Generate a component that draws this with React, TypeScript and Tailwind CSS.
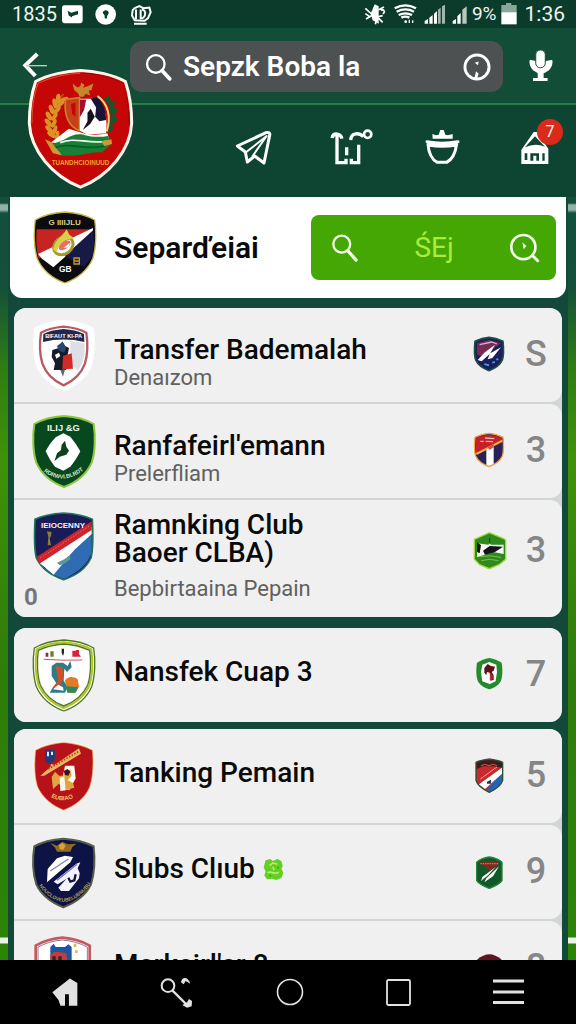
import type { ReactNode } from "react";

const SHIELD =
  "M93 0C62 2 28 10 4 24C-2 62 0 110 10 140C26 176 58 200 93 213C128 200 160 176 176 140C186 110 188 62 182 24C158 10 124 2 93 0Z";

function Crest({ children }: { children: ReactNode }) {
  return (
    <svg viewBox="0 0 186 213" className="h-[71px] w-[62px] shrink-0 overflow-visible" aria-hidden="true">
      {children}
    </svg>
  );
}

function SmallCrest({ children }: { children: ReactNode }) {
  return (
    <svg viewBox="0 0 96 108" className="h-9 w-8 shrink-0 overflow-visible" aria-hidden="true">
      {children}
    </svg>
  );
}

const wheat = [
  [182, 290, 10],
  [172, 304, -6],
  [162, 322, -14],
  [154, 342, -22],
  [152, 362, -30],
  [155, 382, -38],
  [162, 398, -46],
];

function MainCrest() {
  return (
    <svg viewBox="80 204 322 366" className="h-[122px] w-[107px]" aria-hidden="true">
      <path
        d="M241 211C200 212 142 224 106 244C92 285 87 330 87 370C91 450 155 528 241 562C327 528 391 450 395 370C395 330 390 285 376 244C340 224 285 212 241 211Z"
        fill="#c40606"
        stroke="#fff6ee"
        strokeWidth="9"
      />
      <path d="M241 219C205 220 150 231 113 250C99 290 95 330 95 370" fill="none" stroke="#e2512f" strokeWidth="3" />
      <path d="M241 219C285 220 332 231 369 250C383 290 387 330 387 370" fill="none" stroke="#a30404" strokeWidth="3" />
      <path
        d="M217 250L232 262L240 258L243 247L253 254L249 263L262 258L280 250L274 270L266 272L270 286L256 281L250 290L238 290L234 280L222 270Z"
        fill="#c8862a"
      />
      <path d="M190 282C160 310 150 350 172 408" fill="none" stroke="#b5560f" strokeWidth="5" />
      {wheat.map(([x, y, turn]) => (
        <g key={y} fill="#dd9226">
          <ellipse cx={x - 8} cy={y + 6} rx="7" ry="15" transform={`rotate(${turn - 8} ${x - 8} ${y + 6})`} />
          <ellipse cx={x + 9} cy={y + 8} rx="6" ry="14" transform={`rotate(${turn + 56} ${x + 9} ${y + 8})`} />
        </g>
      ))}
      <path d="M196 298L238 293V392C205 380 190 345 196 298Z" fill="#c8401b" stroke="#c9802b" strokeWidth="5" />
      <path d="M212 312L226 308V350L216 342Z" fill="#c40606" />
      <path d="M290 282C325 295 345 340 322 400L340 388L336 374L354 360L342 346L354 328L340 320L346 304L330 300L328 286L312 294Z" fill="#17552c" />
      <path d="M239 296L290 296C318 320 322 360 318 400L262 404L239 392Z" fill="#ffffff" />
      <path d="M239 298H258L252 330L239 352Z" fill="#a3122c" />
      <path d="M272 296L292 290C308 308 318 330 318 360L298 364L285 350L288 322Z" fill="#181438" />
      <path d="M262 338L272 326L284 350L270 372L248 390L262 364Z" fill="#16121c" />
      <path d="M292 288C324 310 334 350 320 394" fill="none" stroke="#e6db80" strokeWidth="6" />
      <path d="M152 428L206 386L244 398C270 406 294 406 322 400L330 430L250 440Z" fill="#fffdf5" />
      <path d="M150 432C196 426 212 396 250 404C276 412 300 412 324 408L332 434L306 458C272 452 240 474 178 466Z" fill="#178035" />
      <path d="M180 428C226 410 254 432 322 424" fill="none" stroke="#ffffff" strokeWidth="5" />
      <path d="M160 444C210 424 256 454 314 438" fill="none" stroke="#0b5a25" strokeWidth="5" />
      <path d="M134 418L156 428C164 446 180 454 184 466L158 460ZM304 424L334 418L336 432L312 438Z" fill="#d19533" />
      <text x="241" y="496" textAnchor="middle" className="font-['Liberation_Sans'] text-[19px] font-bold" fill="#f0a030">
        TUANDHCIOINUUD
      </text>
    </svg>
  );
}

const crests = {
  title: (
    <Crest>
      <path d={SHIELD} fill="#0b0b10" stroke="#c9b84a" strokeWidth="4" />
      <path d="M8 52H176L14 140C6 110 6 80 8 52Z" fill="#c62322" />
      <path d="M177 48V60L58 166L24 140L12 126Z" fill="#ffffff" />
      <path d="M178 54C182 90 180 120 172 138L150 166L92 132Z" fill="#171a45" />
      <text x="92" y="40" textAnchor="middle" className="font-['Liberation_Sans'] text-[24px] font-bold" fill="#d9cf8f">
        G IIIIJLU
      </text>
      <ellipse cx="88" cy="101" rx="31" ry="25" fill="none" stroke="#a99b27" strokeWidth="9" transform="rotate(-38 88 101)" />
      <path d="M58 112C60 88 84 74 98 52L106 68L120 78C100 80 72 94 68 122Z" fill="#d9cf4c" />
      <ellipse cx="92" cy="100" rx="20" ry="11" fill="#e8705f" transform="rotate(-35 92 100)" />
      <path d="M88 108L108 92L104 106Z" fill="#ffffff" />
      <path d="M120 138H136V156H120ZM120 147H136" fill="none" stroke="#c69b22" strokeWidth="4" />
      <text x="94" y="180" textAnchor="middle" className="font-['Liberation_Sans'] text-[25px] font-bold" fill="#ffffff">
        GB
      </text>
    </Crest>
  ),
  transfer: (
    <Crest>
      <path d={SHIELD} fill="#ffffff" />
      <path d="M92 20C70 22 42 28 24 38C20 66 20 104 28 130C40 164 66 184 92 196C118 184 144 164 156 130C164 104 164 66 160 38C142 28 114 22 92 20Z" fill="#ffffff" stroke="#b85a62" strokeWidth="7" />
      <path d="M92 27C70 29 48 33 31 42L30 66C70 56 114 56 154 66L153 42C136 33 114 29 92 27Z" fill="#20284e" />
      <text x="92" y="55" textAnchor="middle" className="font-['Liberation_Sans'] text-[17px] font-bold" fill="#ffffff">
        BIFAUT KI-PA
      </text>
      <path d="M112 62L154 70C158 100 152 130 134 152L112 130Z" fill="#dedfe4" />
      <path d="M58 90L78 84L88 64L96 78L108 84L104 104L114 130L98 150H62L66 130L56 110Z" fill="#181a29" />
      <path d="M72 78L88 66L100 82L94 98L78 92Z" fill="#27486f" />
      <path d="M90 108L116 100L120 146L88 148Z" fill="#d02c25" />
      <path d="M66 104L78 98L82 108L70 116Z" fill="#ffffff" />
      <path d="M82 150L96 148L90 170Z" fill="#5b6475" />
    </Crest>
  ),
  ranfa: (
    <Crest>
      <path d={SHIELD} fill="#08481f" stroke="#8cc63f" strokeWidth="6" />
      <text x="91" y="46" textAnchor="middle" className="font-['Liberation_Sans'] text-[28px] font-bold" fill="#eef7e6">
        ILIJ &amp;G
      </text>
      <path d="M91 52L112 62C124 78 134 90 142 106C134 122 124 138 112 152L91 164L66 152C54 138 46 122 38 106C46 90 56 76 68 64Z" fill="#ffffff" />
      <path d="M96 74L100 92L108 104L100 116L80 122L64 136L72 112L84 102L86 86Z" fill="#10411f" />
      <path id="ranfa-arc" d="M32 166Q92 212 154 160" fill="none" />
      <text className="font-['Liberation_Sans'] text-[17px] font-bold" fill="#d5e6c8">
        <textPath href="#ranfa-arc">RDRWVI.BLRDT</textPath>
      </text>
    </Crest>
  ),
  ranking: (
    <Crest>
      <path d="M92 3C62 5 30 10 6 22C4 62 2 108 10 138C26 172 58 192 92 203C126 192 158 172 174 138C182 108 180 62 178 22C154 10 122 5 92 3Z" fill="#191c56" stroke="#23745c" strokeWidth="5" />
      <path d="M176 60V110C176 150 132 184 92 200C70 194 52 184 38 172Z" fill="#2f6cb4" />
      <path d="M176 44V66L126 112L110 130L62 188L16 150Z" fill="#ffffff" />
      <path d="M176 28V54L18 156L12 134Z" fill="#cf232c" />
      <path d="M22 138L172 40" stroke="#e4757a" strokeWidth="3" strokeDasharray="4 5" />
      <path d="M42 58L56 60L54 72L50 78L54 100H44L46 74Z" fill="#8c7a3c" />
      <path d="M72 152L94 142L110 130L112 142L96 154L80 160Z" fill="#5c9a92" />
      <text x="90" y="47" textAnchor="middle" className="font-['Liberation_Sans'] text-[24px] font-bold" fill="#f1f3f8">
        IEIOCENNY
      </text>
    </Crest>
  ),
  nansfek: (
    <Crest>
      <path d={SHIELD} fill="#ffffff" stroke="#4b7a1d" strokeWidth="4" />
      <path d="M92 7C64 9 34 16 11 28C6 64 8 108 17 137C32 170 60 192 92 204C124 192 154 170 169 137C178 108 180 64 175 28C152 16 120 9 92 7Z" fill="none" stroke="#b5c22a" strokeWidth="6" />
      <path d="M92 12C64 14 38 20 16 31C11 64 13 108 22 135C36 166 62 187 92 198C122 187 150 166 164 135C173 108 175 64 170 31C146 20 120 14 92 12Z" fill="none" stroke="#4b7a1d" strokeWidth="4" />
      <path d="M32 58Q90 62 148 60" stroke="#c95b5b" strokeWidth="3" fill="none" />
      <path d="M38 38H46V50H38Z" fill="#93302e" />
      <path d="M52 34H62V50H52Z" fill="#6f7c2c" />
      <path d="M86 26H93V38L90 48L86 38Z" fill="#26202e" />
      <path d="M118 32H128L130 30H138V42L144 50H118Z" fill="#d8233b" />
      <path d="M56 78L70 68H90L104 78L112 62L116 82L102 96L94 86L92 122L104 140L96 158H50L60 142L70 130L56 108Z" fill="#2e7d86" />
      <path d="M68 78L88 82L92 110L84 132L66 150L62 140L76 120Z" fill="#cf512a" />
      <path d="M60 148L76 134L90 142L92 152Z" fill="#ffffff" />
      <path d="M96 122C102 108 124 108 134 118L138 140L126 158H104Z" fill="#e07b28" />
      <path d="M96 138L136 142L128 158H104Z" fill="#2c8a62" />
    </Crest>
  ),
  tanking: (
    <Crest>
      <path d={SHIELD} fill="#fdf2e0" />
      <path d="M92 5C64 7 34 14 8 28C4 64 4 108 14 138C30 172 58 194 92 207C126 194 156 172 170 138C180 108 182 64 178 28C152 14 120 7 92 5Z" fill="#b71219" stroke="#e4a063" strokeWidth="2" />
      <path d="M36 26H66V54L54 70L36 62Z" fill="#243a78" />
      <path d="M42 32H48V46H42ZM54 32H60V42H54Z" fill="#dfe5f2" />
      <path d="M22 104L52 78L54 68L64 72L138 22L144 38L34 104Z" fill="#e7b65b" />
      <path d="M46 84L136 32" stroke="#b43d20" strokeWidth="5" strokeDasharray="4 5" />
      <path d="M96 74L124 74L128 112L110 146H84V132Z" fill="#fff7e8" />
      <path d="M56 108L66 92L78 104H92L98 90L112 86L116 104L104 118L120 126L124 140L94 148L78 128L60 144Z" fill="#dfa640" />
      <path d="M92 90L104 84L112 92L106 104L96 102Z" fill="#391718" />
      <path d="M80 110L94 106L98 148L82 150Z" fill="#fff7e8" />
      <path id="tanking-arc" d="M54 168Q92 190 134 164" fill="none" />
      <text className="font-['Liberation_Sans'] text-[18px] font-bold" fill="#efc36a">
        <textPath href="#tanking-arc">EUBIAO</textPath>
      </text>
    </Crest>
  ),
  slube: (
    <Crest>
      <path d="M91 5C62 7 28 14 4 28C-2 64 0 110 10 142C26 176 58 198 91 211C124 198 158 176 174 142C184 110 186 64 182 28C156 14 120 7 91 5Z" fill="#0d1345" stroke="#575f45" strokeWidth="6" />
      <path d="M52 18L72 26L88 14L104 22L130 20L118 30L112 44H72L66 32Z" fill="#8f6c22" />
      <path d="M78 24L88 18L98 26L90 40L80 36Z" fill="#d6a439" />
      <path d="M44 96L72 64L96 56L120 60L112 76L42 136Z" fill="#ffffff" />
      <path d="M52 102L106 66" stroke="#8189b5" strokeWidth="4" />
      <path d="M62 134L130 80L142 76L134 94L140 108L138 124L108 162H84L76 152L100 126L74 142Z" fill="#f4f3fd" />
      <path d="M72 130L132 82" stroke="#7570cf" strokeWidth="4" />
      <path d="M106 122L112 134L124 130L128 112" fill="none" stroke="#0d1345" strokeWidth="7" />
      <path id="slube-arc" d="M18 146Q92 244 172 142" fill="none" />
      <text className="font-['Liberation_Sans'] text-[15px] font-bold" fill="#a99d55">
        <textPath href="#slube-arc">NOUCLOVEUBELUBNUBU</textPath>
      </text>
    </Crest>
  ),
  last: (
    <Crest>
      <path d="M88 14C62 16 32 24 8 38V120H170V38C146 24 114 16 88 14Z" fill="#ffffff" stroke="#c6595e" strokeWidth="8" />
      <path d="M88 21C62 23 38 30 15 42V120H163V42C140 30 114 23 88 21Z" fill="none" stroke="#4c3561" strokeWidth="2" />
      <path d="M52 42L62 32L68 42H96L106 34L116 42V100H52Z" fill="#1d55a0" />
      <path d="M52 64L66 56L100 60L104 100H52Z" fill="#c83b33" />
      <path d="M58 70H68V84H58ZM76 70H86V84H76Z" fill="#282540" />
      <path d="M122 32H130V42H122ZM126 52H134V60H126Z" fill="#e8b75c" />
    </Crest>
  ),
};

const SMALL = "M48 4C34 5 18 10 6 16C4 36 4 60 8 72C16 90 32 98 48 104C64 98 80 90 88 72C92 60 92 36 90 16C78 10 62 5 48 4Z";

const smallCrests = {
  transfer: (
    <SmallCrest>
      <path d={SMALL} fill="#1b1f5c" stroke="#1e4f42" strokeWidth="5" />
      <path d="M12 22L48 12L84 22L28 60L12 56Z" fill="#7a2a52" />
      <path d="M20 26L56 18L72 24" stroke="#c7b7cc" strokeWidth="4" fill="none" />
      <path d="M14 72L34 50L66 26L52 52L84 34L58 66L44 70L50 54L26 76Z" fill="#ffffff" />
      <path d="M34 84L48 88M58 80L66 78M70 70H76" stroke="#5a9ee0" strokeWidth="5" />
    </SmallCrest>
  ),
  ranfa: (
    <SmallCrest>
      <path d={SMALL} fill="#29225a" stroke="#f0a443" strokeWidth="4" />
      <path d="M9 19C30 6 66 6 87 19V32L9 66Z" fill="#c51f2b" />
      <path d="M10 66L88 26" stroke="#f6b33f" strokeWidth="6" />
      <path d="M40 52L62 42V96L48 102L40 98Z" fill="#ffffff" />
      <path d="M36 18L64 20M22 28H32M38 28L60 29" stroke="#f6b8a4" strokeWidth="4" />
      <path d="M44 46L62 36V46L50 54Z" fill="#d9542c" />
    </SmallCrest>
  ),
  ranking: (
    <SmallCrest>
      <path d="M49 2L92 20L98 24V82L78 98L49 110L20 98L4 82V22Z" fill="#2f8a1e" stroke="#a6da3c" strokeWidth="4" />
      <path d="M12 34L46 38L50 34L54 38H92V66L60 60L12 76Z" fill="#f4f7ef" />
      <path d="M12 30L24 40L20 64L12 60Z" fill="#12160f" />
      <path d="M30 56L50 42L90 44L66 60L36 68Z" fill="#14131c" />
      <path d="M50 18V34" stroke="#12401a" strokeWidth="3" />
      <path d="M18 74Q50 68 84 76M24 86Q50 78 76 86" stroke="#7bc043" strokeWidth="3" fill="none" />
    </SmallCrest>
  ),
  nansfek: (
    <SmallCrest>
      <path d="M49 6C36 8 22 14 12 20C8 44 10 66 16 78C24 90 36 96 49 100C62 96 74 90 82 78C88 66 90 44 86 20C76 14 62 8 49 6Z" fill="#248a2c" />
      <path d="M49 18L70 26L72 48L68 76L50 84L28 76L24 48L28 26Z" fill="#ffffff" />
      <path d="M34 36L44 24L54 30L66 32L62 44L56 48L62 58V72L52 74L50 50L42 48L40 58L34 50Z" fill="#5d1219" />
      <path d="M52 50L60 60L58 72L50 70Z" fill="#b8262a" />
    </SmallCrest>
  ),
  tanking: (
    <SmallCrest>
      <path d="M49 6C36 8 20 10 9 16V70C14 88 32 98 49 106C66 98 84 88 89 70V16C78 10 62 8 49 6Z" fill="#c9282d" stroke="#24553c" strokeWidth="4" />
      <path d="M11 18C30 6 68 6 87 18V32L62 28H30L11 36Z" fill="#3a1d1f" />
      <path d="M24 26L36 22L48 26L60 22L72 26" stroke="#c35a4f" strokeWidth="3" fill="none" />
      <path d="M87 42V70C82 86 66 96 49 103L40 98Z" fill="#2463ad" />
      <path d="M87 32V50L36 96L18 82Z" fill="#ffffff" />
      <path d="M22 66L72 30" stroke="#efa09a" strokeWidth="3" />
      <path d="M42 74L54 68V80H42Z" fill="#213b4b" />
    </SmallCrest>
  ),
  slube: (
    <SmallCrest>
      <path d="M49 12C36 14 20 20 11 28V82C16 92 34 100 49 106C64 100 82 92 87 82V28C78 20 62 14 49 12Z" fill="#12592a" stroke="#25803b" strokeWidth="4" />
      <path d="M18 30C34 22 64 22 80 30L72 38L50 54L34 40Z" fill="#7e2c20" />
      <path d="M22 32H76" stroke="#c58b45" strokeWidth="4" strokeDasharray="4 3" />
      <path d="M24 84L28 72L68 42L46 66ZM34 88L40 76L78 40L60 70Z" fill="#ffffff" />
    </SmallCrest>
  ),
  last: (
    <SmallCrest>
      <path d="M49 16C38 16 24 22 12 32V90H86V32C74 22 60 16 49 16Z" fill="#5f1420" />
    </SmallCrest>
  ),
};

type Id = keyof typeof smallCrests;
type RowData = { id: Id; title: string[]; sub?: string; count: string; mark?: string; sprout?: boolean };

const groups: RowData[][] = [
  [
    { id: "transfer", title: ["Transfer Bademalah"], sub: "Denaızom", count: "S" },
    { id: "ranfa", title: ["Ranfafeirl'emann"], sub: "Prelerfliam", count: "3" },
    { id: "ranking", title: ["Ramnking Club", "Baoer CLBA)"], sub: "Bepbirtaaina Pepain", count: "3", mark: "0" },
  ],
  [{ id: "nansfek", title: ["Nansfek Cuap 3"], count: "7" }],
  [
    { id: "tanking", title: ["Tanking Pemain"], count: "5" },
    { id: "slube", title: ["Slubs Clıub"], count: "9", sprout: true },
    { id: "last", title: ["Markeirl'er 8"], count: "8" },
  ],
];

function Sprout() {
  return (
    <svg viewBox="0 0 64 68" className="h-[23px] w-[21px]" aria-hidden="true">
      <path d="M8 6L22 2L30 8L44 2L56 8L60 24L56 32L62 44L56 60L40 66L28 62L12 64L4 52L8 40L2 28Z" fill="#62cf22" />
      <path d="M20 22L30 14L44 18M14 44C24 36 36 52 48 42M30 26L34 36" stroke="#b4ec6c" strokeWidth="5" fill="none" />
      <circle cx="22" cy="52" r="3" fill="#3fa81c" />
      <circle cx="46" cy="28" r="3" fill="#3fa81c" />
    </svg>
  );
}

function Row({ row }: { row: RowData }) {
  const tall = row.title.length > 1;
  return (
    <li className={`relative rounded-r-xl bg-[#f0f0f0] ${tall ? "pb-[14px]" : ""}`}>
      <a href={`#${row.id}`} className="flex items-start pr-[11px] pl-[19px]">
        <span className="pt-3 pb-[11px]">{crests[row.id]}</span>
        <span className={`ml-[19px] min-w-0 flex-1 ${tall ? "pt-[11px]" : row.sub ? "pt-7" : "pt-[30px]"}`}>
          {row.title.map((line) => (
            <span key={line} className="flex items-center gap-2 text-[28px] leading-7 font-medium whitespace-nowrap text-[#0a0a0a]">
              {line}
              {row.sprout && <Sprout />}
            </span>
          ))}
          {row.sub && (
            <span className={`block text-[22px] leading-7 whitespace-nowrap text-[#606060] ${tall ? "mt-2" : ""}`}>{row.sub}</span>
          )}
        </span>
        <span className={`flex items-center gap-4 ${tall ? "h-25" : "h-23"}`}>
          {smallCrests[row.id]}
          <span className="w-[30px] text-center text-[36px] leading-10 font-medium text-[#868686]">{row.count}</span>
        </span>
      </a>
      {row.mark && <span className="absolute bottom-2 left-[10px] text-[24px] leading-6 font-bold text-[#777]">{row.mark}</span>}
    </li>
  );
}

function StatusBar() {
  return (
    <div className="flex h-7 items-center justify-between bg-[#0a3b2b] pr-[11px] pl-3 text-[20px] leading-6 text-[#f0f5f2]">
      <div className="flex items-center gap-2">
        <span className="w-[42px]">1835</span>
        <svg viewBox="0 0 270 62" className="h-[21px] w-[90px]" aria-hidden="true">
          <rect x="0" y="3" width="62" height="54" rx="7" fill="#fff" />
          <path d="M17 20L28 26L48 20V30L30 36V40L20 34Z" fill="#0a3b2b" />
          <circle cx="131" cy="31" r="31" fill="#fff" />
          <path d="M122 26C124 14 142 16 140 28L136 34L134 44L128 42V34Z" fill="#0a3b2b" />
          <path d="M218 12L232 6L244 12L262 10L266 24L258 42L248 50L218 48L210 34L212 18Z" fill="none" stroke="#fff" strokeWidth="6" />
          <path d="M222 16V46M236 16V42C250 44 256 18 240 16M216 59H254" fill="none" stroke="#fff" strokeWidth="6" />
        </svg>
      </div>
      <div className="flex items-center gap-1">
        <svg viewBox="206 2 312 66" className="h-[22px] w-[104px]" aria-hidden="true">
          <path d="M250 22L266 14M210 18L232 38L212 50M232 30L262 60M240 66L246 44L262 40M210 34L222 42M256 24C266 20 272 30 262 34" fill="none" stroke="#fff" strokeWidth="5" />
          <path d="M238 6L250 12V64L232 54L226 34Z" fill="#fff" />
          <path d="M298 18Q330 0 362 18M304 28Q330 14 356 28M310 38Q330 28 350 38M318 46Q330 40 342 46" fill="none" stroke="#fff" strokeWidth="7" />
          <circle cx="331" cy="58" r="4" fill="#fff" />
          <path d="M342 52V62M352 54V62" stroke="#fff" strokeWidth="4" />
          <path d="M388 56L398 50V64H388ZM402 46L412 38V64H402ZM416 34L425 26V64H416Z" fill="#fff" />
          <path d="M428 22L436 16V64H428ZM440 12L449 7V64H440Z" fill="#9fb5ac" />
          <path d="M472 56L482 50V64H472ZM486 42L496 32V64H486Z" fill="#fff" />
          <path d="M501 22L514 12V64H501Z" fill="#b7c8c0" />
        </svg>
        <span className="text-[19px]">9%</span>
        <svg viewBox="0 0 48 66" className="h-[22px] w-4" aria-hidden="true">
          <path d="M15 0H31V6H47V30H1V6H15Z" fill="#8aa79b" />
          <path d="M1 28H47V64H1Z" fill="#fff" />
        </svg>
        <span className="ml-1 text-[21px]">1:36</span>
      </div>
    </div>
  );
}

function Toolbar() {
  const icon = "h-10 w-10 overflow-visible";
  return (
    <nav className="flex items-start justify-between pt-[23px] pr-[21px] pb-[29px] pl-[235px]">
      <button aria-label="Send" className="h-10">
        <svg viewBox="705 384 120 120" className={icon}>
          <g fill="none" stroke="#fff" strokeWidth="9" strokeLinejoin="round" strokeLinecap="round">
            <path d="M712 438L798 398C806 396 811 398 809 406L792 489L764 468L742 486L736 456Z" />
            <path d="M738 457L800 408L758 468" strokeWidth="6" />
          </g>
        </svg>
      </button>
      <button aria-label="Line-ups" className="h-10">
        <svg viewBox="122 384 120 120" className={icon}>
          <g fill="none" stroke="#fff" strokeWidth="10">
            <path d="M134 414C138 396 160 400 164 416M149 402V488H176V476M190 420C192 396 216 398 228 410M214 434V488H192V476M178 442V466" />
            <circle cx="241" cy="403" r="11" strokeWidth="8" />
          </g>
        </svg>
      </button>
      <button aria-label="Cup" className="h-10">
        <svg viewBox="402 384 120 120" className={icon}>
          <g fill="none" stroke="#fff" strokeWidth="9" strokeLinejoin="round" strokeLinecap="round">
            <path d="M417 425Q462 434 510 425M420 432C422 462 434 480 448 487H476C490 480 502 462 506 432M424 436Q462 442 502 436" />
          </g>
          <path d="M433 402L444 406L452 404L457 390H467L472 404L480 406L494 402V416H434Z" fill="#fff" />
        </svg>
      </button>
      <button aria-label="Home, 1 new" className="relative h-10">
        <svg viewBox="680 384 120 120" className={icon}>
          <path d="M699 492V450L736 396H745L780 446V492Z" fill="#fff" />
          <path d="M710 442L740 409L770 440Q740 428 710 442Z" fill="#0e4532" />
          <path d="M709 460H717V480H709ZM726 460H752V482H744V467H735V482H726ZM762 460H769V482H762Z" fill="#0e4532" />
        </svg>
        <span className="absolute -top-[9px] left-[22px] flex h-[26px] w-[26px] items-center justify-center rounded-full bg-[#dc2a1a] text-[16px] leading-none text-white">
          7
        </span>
      </button>
    </nav>
  );
}

function Header() {
  return (
    <header className="relative bg-[#0e4532]">
      <StatusBar />
      <div className="flex items-start border-b-2 border-[#23803f] bg-[#124d38] pt-[13px] pr-[22px] pb-[11px] pl-[22px]">
        <button aria-label="Back" className="mt-2.5 w-[26px]">
          <svg viewBox="66 152 78 84" className="h-7 w-[26px]">
            <path d="M112 161L76 195L106 227" fill="none" stroke="#fff" strokeWidth="12" />
            <path d="M78 196H141" stroke="#b9cfc5" strokeWidth="4" />
          </svg>
        </button>
        <label className="ml-[82px] flex h-[51px] min-w-0 flex-1 items-center rounded-xl bg-[#4d5152] pr-3 pl-[15px]">
          <svg viewBox="434 156 80 82" className="h-7 w-[27px] shrink-0" aria-hidden="true">
            <circle cx="466" cy="188" r="26" fill="none" stroke="#fff" strokeWidth="7" />
            <path d="M485 208L507 232" stroke="#fff" strokeWidth="11" strokeLinecap="round" />
          </svg>
          <input
            type="text"
            aria-label="Search"
            defaultValue="Sepzk Boba la"
            className="ml-[11px] min-w-0 flex-1 bg-transparent text-[28px] leading-9 font-semibold text-white outline-none"
          />
          <svg viewBox="526 152 86 86" className="h-7 w-7 shrink-0" aria-hidden="true">
            <circle cx="569" cy="195" r="37" fill="none" stroke="#fff" strokeWidth="9" />
            <path d="M562 182L574 178L572 190ZM566 208L574 216L568 234H560Z" fill="#fff" />
          </svg>
        </label>
        <button aria-label="Voice search" className="mt-2 ml-[25px]">
          <svg viewBox="721 146 78 100" className="h-[33px] w-[26px]">
            <path d="M729 183C729 226 791 226 791 183L776 186C774 204 746 204 744 186Z" fill="#fff" stroke="#fff" strokeWidth="8" strokeLinejoin="round" />
            <rect x="744" y="149" width="29" height="54" rx="14" fill="#fff" stroke="#124d38" strokeWidth="3" />
            <path d="M750 208H768V234H780V243H736V234H750Z" fill="#fff" />
          </svg>
        </button>
      </div>
      <Toolbar />
      <div className="absolute top-[68px] left-[27px]">
        <MainCrest />
      </div>
    </header>
  );
}

function TitleCard() {
  return (
    <section className="mx-0.5 flex items-center rounded-b-xl bg-white py-[15px] pr-2.5 pl-6">
      {crests.title}
      <h1 className="ml-[18px] flex-1 text-[30px] leading-9 font-semibold text-[#0a0a0a]">Separďeiai</h1>
      <div className="flex h-[65px] w-[245px] items-center justify-between rounded-lg bg-[#45a704] pr-[15px] pl-5">
        <button aria-label="Find">
          <svg viewBox="128 128 86 92" className="h-[30px] w-7">
            <circle cx="161" cy="162" r="26" fill="none" stroke="#f4ffe9" strokeWidth="7" />
            <path d="M181 184L205 211" stroke="#f4ffe9" strokeWidth="10" strokeLinecap="round" />
          </svg>
        </button>
        <span className="text-[28px] leading-9 text-[#a9ee35]">ŚEj</span>
        <button aria-label="Find recent">
          <svg viewBox="666 128 96 92" className="h-[30px] w-8">
            <circle cx="709" cy="171" r="37" fill="none" stroke="#f4ffe9" strokeWidth="8" />
            <path d="M737 197L753 213" stroke="#f4ffe9" strokeWidth="9" strokeLinecap="round" />
            <path d="M706 156L718 168L710 178Z" fill="#f4ffe9" />
          </svg>
        </button>
      </div>
    </section>
  );
}

function SystemBar() {
  return (
    <nav className="flex h-16 shrink-0 items-center justify-between bg-black px-[52px]">
      <button aria-label="Home screen">
        <svg viewBox="156 477 80 88" className="h-[29px] w-[26px]">
          <path d="M211 478L234 492V562H208V526H196V562H182L176 544L157 520Z" fill="#e2e2e2" />
        </svg>
      </button>
      <button aria-label="Tools">
        <svg viewBox="475 474 99 93" className="h-[31px] w-[33px]">
          <circle cx="499" cy="500" r="19" fill="none" stroke="#e2e2e2" strokeWidth="6" />
          <path d="M512 514L556 558" stroke="#e2e2e2" strokeWidth="7" />
          <path d="M542 558L556 550L562 540L571 546L570 562L556 566Z" fill="#e2e2e2" />
          <path d="M538 490C540 472 560 472 566 494L552 486L546 496Z" fill="#e2e2e2" />
        </svg>
      </button>
      <button aria-label="Overview">
        <svg viewBox="0 0 28 28" className="h-7 w-7">
          <circle cx="14" cy="14" r="12.5" fill="none" stroke="#e2e2e2" strokeWidth="1.6" />
        </svg>
      </button>
      <button aria-label="Recent apps">
        <svg viewBox="0 0 25 27" className="h-[27px] w-[25px]">
          <rect x="1" y="1" width="23" height="25" rx="1.5" fill="none" stroke="#e2e2e2" strokeWidth="1.8" />
        </svg>
      </button>
      <button aria-label="Menu">
        <svg viewBox="0 0 31 26" className="h-[26px] w-[31px]">
          <path d="M0 2H31M0 13H31M0 23.500H31" stroke="#e2e2e2" strokeWidth="2.800" />
        </svg>
      </button>
    </nav>
  );
}

export default function App() {
  return (
    <div className="flex h-screen flex-col font-[Roboto,sans-serif]">
      <Header />
      <main className="min-h-0 flex-1 overflow-y-auto bg-[linear-gradient(#124f3d_0,#124f3d_6px,#8fb3a5_8px,#8fb3a5_13px,#124f3d_16px,#14503a_90px,#2f7d12_170px,#3f9208_260px,#2f7c08_480px,#2c8406_740px,#e9f5e6_741px,#e9f5e6_746px,#2c8406_747px)] px-2 [scrollbar-width:none]">
        <div className="bg-[#12493a]">
          <TitleCard />
          <div className="flex flex-col px-1.5 pt-[10px]">
            {groups.map((rows, i) => (
              <ul
                key={rows[0].id}
                className={`flex flex-col gap-0.5 overflow-hidden rounded-xl bg-[#d3d6d7] ${i === 1 ? "mt-[11px]" : i === 2 ? "mt-[7px]" : ""}`}
              >
                {rows.map((row) => (
                  <Row key={row.id} row={row} />
                ))}
              </ul>
            ))}
          </div>
        </div>
      </main>
      <SystemBar />
    </div>
  );
}
